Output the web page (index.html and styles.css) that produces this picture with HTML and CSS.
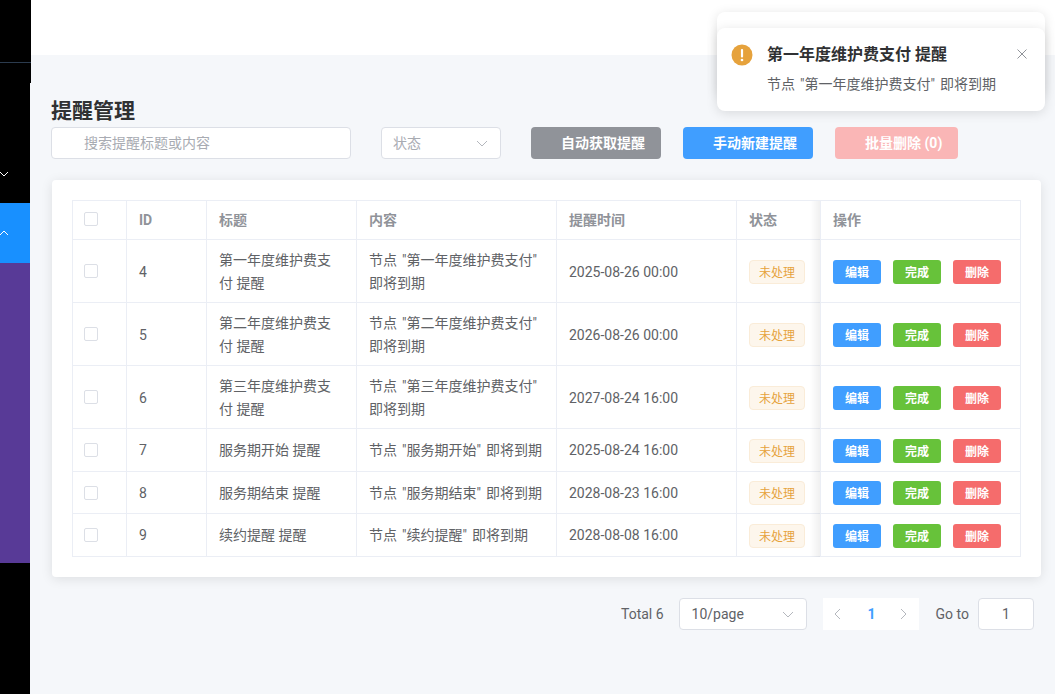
FILE: index.html
```html
<!DOCTYPE html>
<html lang="zh-CN">
<head>
<meta charset="utf-8">
<title>提醒管理</title>
<link rel="stylesheet" href="styles.css">
</head>
<body>
<div class="app">
  <aside class="sidebar">
    <div class="side-logo"></div>
    <div class="side-top-rest"></div>
    <div class="side-item">
      <svg class="side-chevron" viewBox="0 0 10 6"><path d="M1 1l4 4 4-4"/></svg>
    </div>
    <div class="side-active">
      <svg class="side-chevron" viewBox="0 0 10 6"><path d="M1 5l4-4 4 4"/></svg>
    </div>
    <div class="side-sub"></div>
    <div class="side-fill"></div>
  </aside>
  <main class="main">
    <header class="topbar"></header>
    <section class="content">
      <h1 class="page-title">提醒管理</h1>
      <div class="toolbar">
        <div class="field search"><span class="placeholder">搜索提醒标题或内容</span></div>
        <div class="field status"><span class="placeholder">状态</span>
          <svg class="chevron" viewBox="0 0 12 7"><path d="M1 1l5 5 5-5"/></svg>
        </div>
        <div class="btn-group">
          <button class="btn btn-grey">自动获取提醒</button>
          <button class="btn btn-blue">手动新建提醒</button>
          <button class="btn btn-pale">批量删除 (0)</button>
        </div>
      </div>
      <div class="card">
        <table class="table">
          <colgroup>
            <col class="c1"><col class="c2"><col class="c3"><col class="c4"><col class="c5"><col class="c6"><col class="c7">
          </colgroup>
          <thead>
            <tr><th class="cell-check"><span class="check"></span></th><th>ID</th><th>标题</th><th>内容</th><th>提醒时间</th><th>状态</th><th class="cell-fixed">操作</th></tr>
          </thead>
          <tbody>
            <tr class="tall"><td class="cell-check"><span class="check"></span></td><td>4</td><td>第一年度维护费支付 提醒</td><td class="cell-content">节点 "第一年度维护费支付" 即将到期</td><td>2025-08-26 00:00</td><td><span class="tag">未处理</span></td><td class="cell-fixed"><div class="actions"><button class="mini m-blue">编辑</button><button class="mini m-green">完成</button><button class="mini m-red">删除</button></div></td></tr>
            <tr class="tall"><td class="cell-check"><span class="check"></span></td><td>5</td><td>第二年度维护费支付 提醒</td><td class="cell-content">节点 "第二年度维护费支付" 即将到期</td><td>2026-08-26 00:00</td><td><span class="tag">未处理</span></td><td class="cell-fixed"><div class="actions"><button class="mini m-blue">编辑</button><button class="mini m-green">完成</button><button class="mini m-red">删除</button></div></td></tr>
            <tr class="tall"><td class="cell-check"><span class="check"></span></td><td>6</td><td>第三年度维护费支付 提醒</td><td class="cell-content">节点 "第三年度维护费支付" 即将到期</td><td>2027-08-24 16:00</td><td><span class="tag">未处理</span></td><td class="cell-fixed"><div class="actions"><button class="mini m-blue">编辑</button><button class="mini m-green">完成</button><button class="mini m-red">删除</button></div></td></tr>
            <tr class="short"><td class="cell-check"><span class="check"></span></td><td>7</td><td>服务期开始 提醒</td><td class="cell-content">节点 "服务期开始" 即将到期</td><td>2025-08-24 16:00</td><td><span class="tag">未处理</span></td><td class="cell-fixed"><div class="actions"><button class="mini m-blue">编辑</button><button class="mini m-green">完成</button><button class="mini m-red">删除</button></div></td></tr>
            <tr class="short2"><td class="cell-check"><span class="check"></span></td><td>8</td><td>服务期结束 提醒</td><td class="cell-content">节点 "服务期结束" 即将到期</td><td>2028-08-23 16:00</td><td><span class="tag">未处理</span></td><td class="cell-fixed"><div class="actions"><button class="mini m-blue">编辑</button><button class="mini m-green">完成</button><button class="mini m-red">删除</button></div></td></tr>
            <tr class="short"><td class="cell-check"><span class="check"></span></td><td>9</td><td>续约提醒 提醒</td><td class="cell-content">节点 "续约提醒" 即将到期</td><td>2028-08-08 16:00</td><td><span class="tag">未处理</span></td><td class="cell-fixed"><div class="actions"><button class="mini m-blue">编辑</button><button class="mini m-green">完成</button><button class="mini m-red">删除</button></div></td></tr>
          </tbody>
        </table>
      </div>
      <nav class="pagination">
        <span class="total">Total 6</span>
        <div class="field size"><span>10/page</span>
          <svg class="chevron" viewBox="0 0 12 7"><path d="M1 1l5 5 5-5"/></svg>
        </div>
        <div class="pager">
          <span class="pager-btn pager-prev"><svg class="pager-icon" viewBox="0 0 7 12"><path d="M6 1L1 6l5 5"/></svg></span>
          <span class="pager-btn pager-current">1</span>
          <span class="pager-btn pager-next"><svg class="pager-icon" viewBox="0 0 7 12"><path d="M1 1l5 5-5 5"/></svg></span>
        </div>
        <span class="goto">Go to</span>
        <div class="field jump">1</div>
      </nav>
    </section>
  </main>
</div>
<div class="toast toast-back"></div>
<div class="toast toast-front">
  <svg class="toast-icon" viewBox="0 0 22 22"><circle cx="11" cy="11" r="10.5"/><rect class="mark" x="9.9" y="5" width="2.2" height="8.4" rx="1"/><circle class="mark" cx="11" cy="16" r="1.35"/></svg>
  <div class="toast-body">
    <div class="toast-title">第一年度维护费支付 提醒</div>
    <div class="toast-text">节点 "第一年度维护费支付" 即将到期</div>
  </div>
  <svg class="toast-close" viewBox="0 0 10 10"><path d="M.5.5l9 9M9.5.5l-9 9"/></svg>
</div>
</body>
</html>
```
FILE: styles.css
```css
* { box-sizing: border-box; }
html, body { margin: 0; height: 100%; overflow: hidden; }
body {
  font-family: Roboto, "Noto Sans CJK SC", sans-serif;
  font-size: 14px;
  color: #606266;
  background: #f5f7fa;
}
.app { display: flex; height: 694px; }

.sidebar { width: 30px; flex: none; display: flex; flex-direction: column; background: #000; position: relative; z-index: 1; }
.side-logo { width: 31px; height: 63px; background: #000; border-bottom: 1px solid #2b3b4e; }
.side-top-rest { width: 31px; height: 20px; background: #000; }
.side-item { height: 120px; padding-top: 88px; line-height: 0; overflow: hidden; }
.side-active { height: 60px; background: #1890ff; padding-top: 27px; line-height: 0; overflow: hidden; }
.side-sub { height: 300px; background: #583a97; }
.side-fill { flex: 1; }
.side-chevron { width: 10px; height: 6px; margin-left: -1px; fill: none; stroke: #fff; stroke-width: 1; }

.main { flex: 1; min-width: 0; }
.topbar { height: 55px; background: #fff; }
.content { padding: 41px 14px 0 21px; }
.page-title { margin: 0; font-size: 21px; line-height: 31px; font-weight: 700; color: #303133; }

.toolbar { display: flex; align-items: center; margin-bottom: 21px; }
.field {
  height: 32px; background: #fff; border: 1px solid #dcdfe6; border-radius: 4px;
  display: flex; align-items: center; justify-content: space-between;
}
.placeholder { color: #a8abb2; margin-bottom: 2px; }
.search { width: 300px; padding-left: 32px; margin-right: 30px; }
.status { width: 120px; padding: 0 12px 0 11px; margin-right: 30px; }
.chevron { width: 12px; height: 7px; fill: none; stroke: #b4b7bd; stroke-width: 1; }
.btn-group { display: flex; gap: 22px; }
.btn {
  height: 32px; border: 0; border-radius: 4px; color: #fff; font: inherit; font-weight: 700;
  padding: 0 0 2px 30px; width: 130px; text-align: left; white-space: nowrap;
}
.btn-grey { background: #909399; }
.btn-blue { background: #409eff; }
.btn-pale { background: #fab6b6; width: 123px; }

.card {
  margin-left: 1px; padding: 20px; background: #fff; border-radius: 4px;
  box-shadow: 0 2px 12px rgba(0, 0, 0, .1);
}
.table {
  width: 949px; table-layout: fixed; border-collapse: separate; border-spacing: 0;
  border-top: 1px solid #ebeef5; border-left: 1px solid #ebeef5;
}
.c1 { width: 54px; } .c2 { width: 80px; } .c3 { width: 150px; } .c4 { width: 200px; }
.c5 { width: 180px; } .c6 { width: 84px; } .c7 { width: 200px; }
.table th, .table td {
  padding: 8px 12px; line-height: 23px; text-align: left; vertical-align: middle; font-weight: 400;
  border-right: 1px solid #ebeef5; border-bottom: 1px solid #ebeef5; background: #fff;
}
.table th { height: 39px; padding-top: 0; padding-bottom: 0; font-weight: 700; color: #909399; }
.tall td { height: 63px; }
.short td { height: 43px; }
.short2 td { height: 42px; }
.table .tall td, .table .short2 td { padding-top: 9px; padding-bottom: 7px; }
.table .cell-check { padding-left: 11px; padding-right: 0; line-height: 0; }
.table th.cell-check { padding-bottom: 2px; }
.table .tall .cell-check, .table .short2 .cell-check, .table .tall .cell-fixed, .table .short2 .cell-fixed { padding-top: 8px; padding-bottom: 8px; }
.table .tall td:nth-child(6), .table .short2 td:nth-child(6) { padding-top: 8px; padding-bottom: 8px; }
.cell-content { word-spacing: 1.5px; }
.table .cell-fixed { position: relative; }
.table .cell-fixed::before {
  content: ""; position: absolute; left: -11px; top: 0; bottom: -1px; width: 10px;
  background: linear-gradient(to left, rgba(0, 0, 0, .06), rgba(0, 0, 0, 0));
}
.check { display: inline-block; width: 14px; height: 14px; border: 1px solid #dcdfe6; border-radius: 2px; background: #fff; }
.tag {
  display: inline-block; height: 24px; width: 56px; line-height: 24px; text-align: center; font-size: 12px;
  color: #e6a23c; background: #fdf6ec; border: 1px solid #faecd8; border-radius: 4px; vertical-align: middle; margin-top: 1px;
}
.actions { display: flex; gap: 12px; padding-top: 1px; }
.mini {
  width: 48px; height: 24px; padding: 2px 0 0; border: 0; border-radius: 3px; color: #fff; font: inherit;
  font-size: 12px; font-weight: 700;
}
.m-blue { background: #409eff; }
.m-green { background: #67c23a; }
.m-red { background: #f56c6c; }

.pagination { display: flex; align-items: center; justify-content: flex-end; margin: 21px 7px 0 0; height: 32px; }
.total { margin-right: 15px; }
.size { width: 128px; padding: 0 12px 0 12px; margin-right: 16px; }
.pager { display: flex; margin-right: 17px; }
.pager-btn { width: 32px; height: 32px; background: #fff; display: flex; align-items: center; justify-content: center; }
.pager-prev { padding-right: 2px; }
.pager-next { padding-left: 2px; }
.pager-current { color: #409eff; font-weight: 700; padding-left: 2px; }
.pager-icon { width: 7px; height: 12px; fill: none; stroke: #b4b7bd; stroke-width: 1; }
.goto { margin-right: 9px; }
.jump { width: 56px; justify-content: center; }

.toast {
  position: absolute; left: 717px; width: 328px; height: 83px; background: #fff; border-radius: 8px;
  box-shadow: 0 2px 12px rgba(0, 0, 0, .12);
}
.toast-back { top: 12px; }
.toast-front { top: 28px; display: flex; align-items: flex-start; padding: 16px 0 0 14px; }
.toast-icon { width: 22px; height: 22px; flex: none; margin: 0 14px 0 0; fill: #e6a23c; }
.toast-icon .mark { fill: #fff; }
.toast-title { font-size: 16px; line-height: 22px; font-weight: 700; color: #303133; margin-bottom: 7px; }
.toast-text { line-height: 22px; color: #606266; word-spacing: 1.5px; }
.toast-close { position: absolute; top: 21px; left: 300px; width: 10px; height: 10px; fill: none; stroke: #909399; stroke-width: 1; }
```
